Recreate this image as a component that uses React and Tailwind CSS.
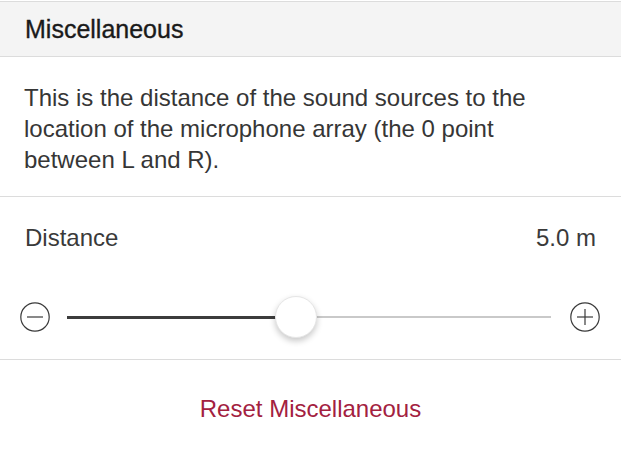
import React, { useState } from 'react';

const MIN = 0.5;
const MAX = 10;

const CircleIcon = ({ plus }) => (
    <svg width="30" height="30" viewBox="0 0 30 30" fill="none" stroke="#3a3a3a" strokeWidth="1.2">
        <circle cx="15" cy="15" r="14.2" />
        <line x1="7" y1="15" x2="23" y2="15" />
        {plus && <line x1="15" y1="7" x2="15" y2="23" />}
    </svg>
);

const App = () => {
    const [distance] = useState(5.0);
    const pct = ((distance - MIN) / (MAX - MIN)) * 100;

    return (
        <div className="w-full h-[461px] bg-white pt-px overflow-hidden" style={{ fontFamily: '"Liberation Sans", Arial, sans-serif' }}>
            {/* Section header */}
            <div className="h-[56px] flex items-center px-[25px] bg-[#f4f4f4] border-y border-[#dcdcdc]">
                <h2 className="text-[25px] font-medium text-[#1a1a1a] leading-none [-webkit-text-stroke:0.35px_#1a1a1a]">Miscellaneous</h2>
            </div>

            {/* Description */}
            <div className="pl-[24px] pr-[60px] pt-[25px] pb-[21px] border-b border-[#dcdcdc]">
                <p className="text-[24px] leading-[31px] text-[#363636]">
                    This is the distance of the sound sources to the location of the microphone array (the 0 point between L and R).
                </p>
            </div>

            {/* Distance */}
            <div className="pt-[25px] pb-[21px] border-b border-[#dcdcdc]">
                <div className="flex justify-between px-[25px] text-[24px] leading-[31px] text-[#3a3a3a]">
                    <span>Distance</span>
                    <span>{distance.toFixed(1)} m</span>
                </div>
                <div className="mt-[43px] h-[42px] flex items-center pl-[20px] pr-[21px]">
                    <CircleIcon />
                    <div className="relative flex-1 ml-[17px] mr-[19px] h-[3px] flex items-center">
                        <div className="h-[3px] bg-[#3c3c3c]" style={{ width: `${pct}%` }} />
                        <div className="flex-1 h-[2px] bg-[#c9c9c9]" />
                        <div
                            className="absolute top-1/2 w-[42px] h-[42px] -translate-x-1/2 -translate-y-1/2 rounded-full bg-white border border-[#e6e6e6] shadow-[0_3px_6px_rgba(0,0,0,0.22)]"
                            style={{ left: `${pct}%` }}
                        />
                    </div>
                    <CircleIcon plus />
                </div>
            </div>

            {/* Reset */}
            <div className="h-[96px] flex items-center justify-center">
                <button className="text-[24px] leading-[31px] text-[#a3213f]">Reset Miscellaneous</button>
            </div>
        </div>
    );
};

export default App;
